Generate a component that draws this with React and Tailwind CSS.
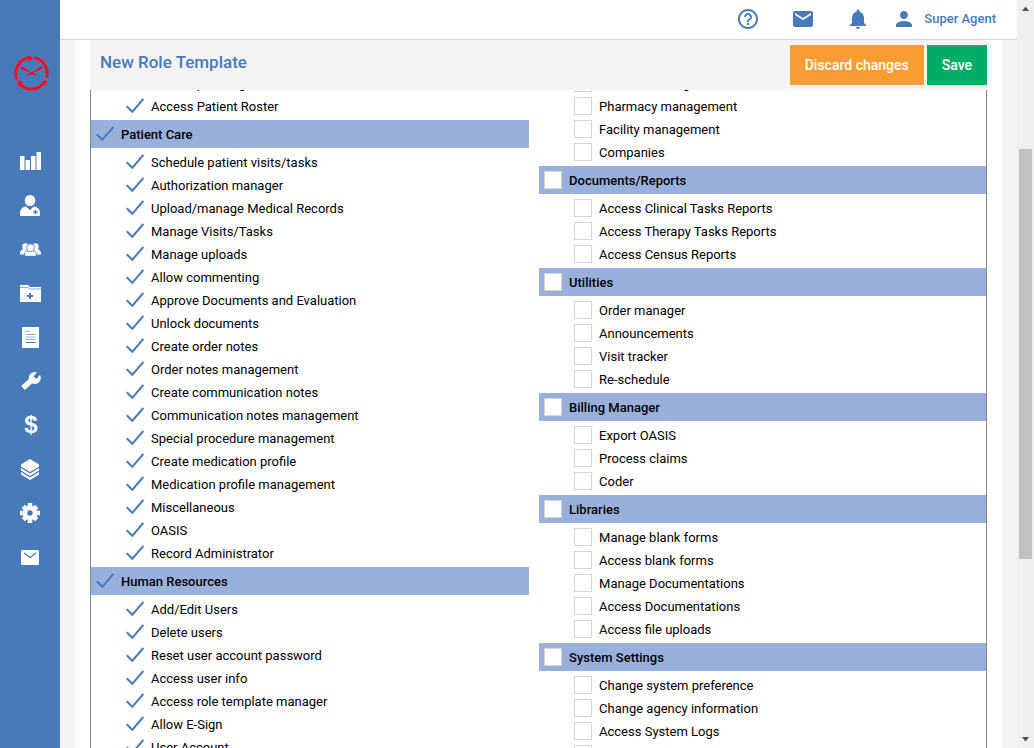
import { MdEmail, MdHelpOutline, MdNotifications, MdPerson } from "react-icons/md";

const leftGroups = [
  { items: ["Access planning", "Access Patient Roster"] },
  {
    title: "Patient Care",
    items: [
      "Schedule patient visits/tasks",
      "Authorization manager",
      "Upload/manage Medical Records",
      "Manage Visits/Tasks",
      "Manage uploads",
      "Allow commenting",
      "Approve Documents and Evaluation",
      "Unlock documents",
      "Create order notes",
      "Order notes management",
      "Create communication notes",
      "Communication notes management",
      "Special procedure management",
      "Create medication profile",
      "Medication profile management",
      "Miscellaneous",
      "OASIS",
      "Record Administrator",
    ],
  },
  {
    title: "Human Resources",
    items: [
      "Add/Edit Users",
      "Delete users",
      "Reset user account password",
      "Access user info",
      "Access role template manager",
      "Allow E-Sign",
      "User Account",
    ],
  },
];

const rightGroups = [
  { items: ["Provider management", "Pharmacy management", "Facility management", "Companies"] },
  {
    title: "Documents/Reports",
    items: ["Access Clinical Tasks Reports", "Access Therapy Tasks Reports", "Access Census Reports"],
  },
  { title: "Utilities", items: ["Order manager", "Announcements", "Visit tracker", "Re-schedule"] },
  { title: "Billing Manager", items: ["Export OASIS", "Process claims", "Coder"] },
  {
    title: "Libraries",
    items: [
      "Manage blank forms",
      "Access blank forms",
      "Manage Documentations",
      "Access Documentations",
      "Access file uploads",
    ],
  },
  {
    title: "System Settings",
    items: ["Change system preference", "Change agency information", "Access System Logs", "Access Audit"],
  },
];

function Logo() {
  return (
    <svg viewBox="0 0 36 36" className="size-9" fill="none" stroke="#fb0d1b" aria-hidden="true">
      <g strokeWidth="3">
        <path d="M21.500 2.800A15.800 15.800 0 0 1 33.600 22.500" />
        <path d="M31.800 26.500A15.800 15.800 0 0 1 7 29.500" />
        <path d="M4 24.500A15.800 15.800 0 0 1 16 2.700" />
      </g>
      <g fill="#fb0d1b" stroke="none">
        <path d="M15.500.2 20.800 3 16 6.400z" />
        <path d="M4.200 25.200 10.200 27.500 5.500 31.500z" />
        <path d="M34.500 25.500 29 26l3.500 4z" />
      </g>
      <path strokeWidth="1.300" d="M7 12 22.500 20M29.500 11.800 14.500 20.500" />
      <path strokeWidth="2.200" d="M8.500 12.800l4.500 2.300M28 12.600l-4.500 2.600M16.500 18.300h4" />
    </svg>
  );
}

function BarsIcon() {
  return (
    <svg viewBox="0 0 21 18" className="h-[18px] w-[21px]" fill="currentColor" aria-hidden="true">
      <path d="M0 4h4.500v14H0zM5.500 8H10v10H5.500zM11 4h4.500v14H11zM16.500 0H21v18h-4.500z" />
    </svg>
  );
}

function NurseIcon() {
  return (
    <svg viewBox="0 0 20 21" className="h-[21px] w-5" fill="currentColor" aria-hidden="true">
      <ellipse cx="10" cy="5.500" rx="5.300" ry="5.500" />
      <path d="M6 11.300l4 4 4-4c4 .8 6 3.200 6 7V21H0v-2.700c0-3.800 2-6.200 6-7z" />
      <path d="M15.500 14.800v4.400M13.300 17h4.400" stroke="#4879b9" strokeWidth="1.400" />
    </svg>
  );
}

function GroupIcon() {
  return (
    <svg viewBox="0 0 21 13" className="h-[13px] w-[21px]" fill="currentColor" aria-hidden="true">
      <circle cx="5.500" cy="3.500" r="3.200" />
      <circle cx="15.500" cy="3.500" r="3.200" />
      <path d="M0 10.500C0 8 1.500 6.500 4 6h3v5.500H0zM21 10.500C21 8 19.500 6.500 17 6h-3v5.500h7z" />
      <g stroke="#4879b9" strokeWidth=".8">
        <path d="M4.700 13.300V11c0-2 1.500-3.500 3.600-3.500h4.400c2.100 0 3.600 1.500 3.600 3.500v2.300z" />
        <circle cx="10.500" cy="4.800" r="4" />
      </g>
    </svg>
  );
}

function FolderIcon() {
  return (
    <svg viewBox="0 0 21 17" className="h-[17px] w-[21px]" fill="currentColor" aria-hidden="true">
      <path d="M0 0h8l2 2h11v15H0z" />
      <path d="M0 2.500h8l2 1.500h11" fill="none" stroke="#4879b9" strokeWidth=".6" />
      <path d="M10 8v6M7 11h6" stroke="#4879b9" strokeWidth="2" />
    </svg>
  );
}

function DocumentIcon() {
  return (
    <svg viewBox="0 0 17 21" className="h-[21px] w-[17px]" fill="currentColor" aria-hidden="true">
      <path d="M0 0h17v21H0z" />
      <path d="M3.500 4.500h4M3.500 7.500h10M3.500 10h10M3.500 12.500h10" stroke="#4879b9" strokeWidth=".6" />
      <path d="M3.500 15.500h10" stroke="#4879b9" />
    </svg>
  );
}

function WrenchIcon() {
  return (
    <svg viewBox="0 0 21 19" className="h-[19px] w-[21px]" aria-hidden="true">
      <path d="M3 16 13 7" stroke="currentColor" strokeWidth="5.500" />
      <circle cx="14.800" cy="6" r="6" fill="currentColor" />
      <path d="M15 5.800 20.500-1" stroke="#4879b9" strokeWidth="4" />
    </svg>
  );
}

function LayersIcon() {
  return (
    <svg viewBox="0 0 18 21" className="h-[21px] w-[18px]" fill="currentColor" aria-hidden="true">
      <path d="M9 0l9 5.500v2L9 13 0 7.500v-2z" />
      <path d="M0 9l9 5.500L18 9v2.500L9 17l-9-5.500z" />
      <path d="M0 13l9 5.500 9-5.500v2.500L9 21l-9-5.500z" />
    </svg>
  );
}

function GearIcon() {
  return (
    <svg viewBox="-10 -10 20 20" className="size-5" aria-hidden="true">
      <path
        d="M0-10V10M-10 0H10M-6.700-6.700 6.700 6.700M6.700-6.700-6.700 6.700"
        stroke="currentColor"
        strokeWidth="4.600"
      />
      <circle r="7.200" fill="currentColor" />
      <circle r="2.700" fill="#4879b9" />
    </svg>
  );
}

function SmallMailIcon() {
  return (
    <svg viewBox="0 0 18 15" className="h-[15px] w-[18px]" aria-hidden="true">
      <rect width="18" height="15" rx="1.500" fill="currentColor" />
      <path d="M3 3l6 4.500L15 3" fill="none" stroke="#4879b9" strokeWidth="1.200" />
    </svg>
  );
}

const navItems = [
  { label: "Dashboard", icon: <BarsIcon /> },
  { label: "Patients", icon: <NurseIcon /> },
  { label: "Users", icon: <GroupIcon /> },
  { label: "Records", icon: <FolderIcon /> },
  { label: "Documents", icon: <DocumentIcon /> },
  { label: "Utilities", icon: <WrenchIcon /> },
  {
    label: "Billing",
    icon: <span className="pl-0.5 font-['Liberation_Sans',sans-serif] text-2xl font-bold">$</span>,
  },
  { label: "Libraries", icon: <LayersIcon /> },
  { label: "Settings", icon: <GearIcon /> },
  { label: "Messages", icon: <SmallMailIcon /> },
];

function Check({ label, checked, bold }) {
  return (
    <label className={bold ? "flex h-[18px] items-center gap-[7px] font-medium" : "flex h-[18px] items-center gap-[7px]"}>
      <span className="grid size-[18px] shrink-0">
        <input
          type="checkbox"
          defaultChecked={checked}
          className="peer col-start-1 row-start-1 size-[18px] appearance-none border border-[#d4d4d4] bg-white checked:border-transparent checked:bg-transparent"
        />
        <svg
          viewBox="0 0 18 18"
          className="pointer-events-none invisible col-start-1 row-start-1 size-[18px] peer-checked:visible"
          fill="none"
          stroke="#4879b9"
          strokeWidth="2"
          aria-hidden="true"
        >
          <path d="M.7 9.300 6.300 14.800 17.300 2" />
        </svg>
      </span>
      <span className="pt-0.5 whitespace-nowrap">{label}</span>
    </label>
  );
}

function Group({ title, items, checked }) {
  return (
    <section>
      {title && (
        <div className="bg-[#99b0dd] p-[5px]">
          <Check label={title} checked={checked} bold />
        </div>
      )}
      <ul className={title ? "pt-[5px] pl-[35px]" : "pl-[35px]"}>
        {items.map((item) => (
          <li key={item} className="pb-[5px]">
            <Check label={item} checked={checked} />
          </li>
        ))}
      </ul>
    </section>
  );
}

export default function App() {
  return (
    <div className="flex h-screen overflow-hidden bg-[#f4f4f4] font-[Roboto,sans-serif] text-[13px] text-black">
      <nav className="flex w-15 shrink-0 flex-col items-center bg-[#4879b9] pt-[55px] text-white">
        <a href="#home" aria-label="Home" className="mb-12 pl-0.5">
          <Logo />
        </a>
        {navItems.map(({ label, icon }) => (
          <a key={label} href="#nav" aria-label={label} className="flex h-11 w-full items-center justify-center">
            {icon}
          </a>
        ))}
      </nav>

      <div className="flex min-w-0 flex-1 flex-col">
        <header className="flex h-10 shrink-0 items-center justify-end border-b border-[#d4d4d4] bg-white pr-[21px] pb-px text-[#4879b9]">
          <div className="mr-[22px] flex gap-[31px]">
            <button type="button" aria-label="Help">
              <MdHelpOutline className="size-6" />
            </button>
            <button type="button" aria-label="Messages">
              <MdEmail className="size-6" />
            </button>
            <button type="button" aria-label="Notifications">
              <MdNotifications className="size-6" />
            </button>
          </div>
          <button type="button" className="flex items-center gap-2 font-medium">
            <MdPerson className="size-6" />
            Super Agent
          </button>
        </header>

        <main className="mx-[15px] flex min-h-0 flex-1 flex-col bg-white px-[15px]">
          <div className="flex h-[50px] shrink-0 items-center justify-between bg-[#f4f4f4] pl-[10px]">
            <h1 className="pb-1 text-[17px] font-medium text-[#4879b9]">New Role Template</h1>
            <div className="flex gap-[3px] text-sm font-medium text-white">
              <button type="button" className="h-10 bg-[#f99d33] px-[15px]">
                Discard changes
              </button>
              <button type="button" className="h-10 bg-[#00ad67] px-[15px]">
                Save
              </button>
            </div>
          </div>

          <form className="flex min-h-0 flex-1 gap-[10px] overflow-hidden border-x border-[#858585]">
            <div className="-mt-4 flex-[49]">
              {leftGroups.map((group, i) => (
                <Group key={i} {...group} checked />
              ))}
            </div>
            <div className="-mt-4 flex-[50]">
              {rightGroups.map((group, i) => (
                <Group key={i} {...group} checked={false} />
              ))}
            </div>
          </form>
        </main>
      </div>

      <div className="flex w-[17px] shrink-0 flex-col items-center bg-[#eff0f0]" aria-hidden="true">
        <svg viewBox="0 0 17 17" className="size-[17px]" fill="#505050">
          <path d="M8.500 6.500 12 11H5z" />
        </svg>
        <div className="flex-[132]" />
        <div className="w-[13px] flex-[410] bg-[#c1c1c1]" />
        <div className="flex-[172]" />
        <svg viewBox="0 0 17 17" className="size-[17px]" fill="#505050">
          <path d="M8.500 10.500 5 6h7z" />
        </svg>
      </div>
    </div>
  );
}
